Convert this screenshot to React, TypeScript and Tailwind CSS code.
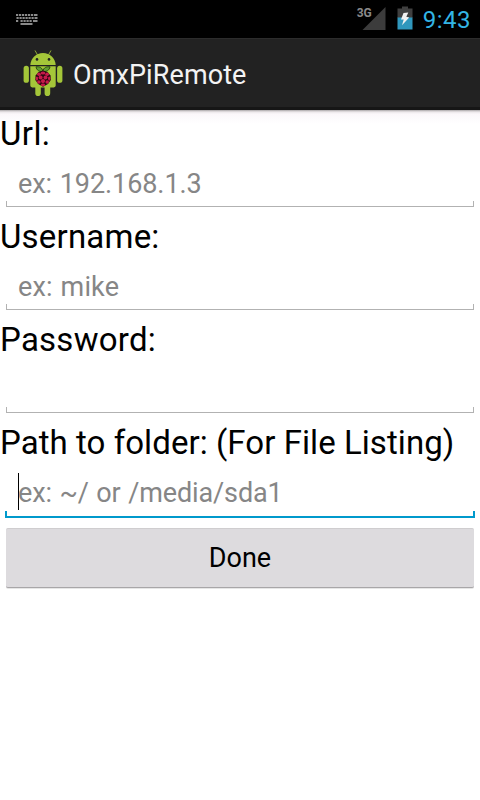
import React from 'react';

function KeyboardIcon() {
  const rows = [
    { y: 0, xs: [0, 3, 6, 9, 12, 15, 18] },
    { y: 3, xs: [0.5, 3.5, 6.5, 9.5, 12.5, 15.5, 18.5] },
    { y: 6, xs: [0, 4.5, 7.5, 10.5, 13.5, 17] },
  ];
  return (
    <svg width="22" height="12" viewBox="0 0 22 12" fill="#8a8a8a">
      {rows.map((r) =>
        r.xs.map((x, i) => (
          <rect key={`${r.y}-${i}`} x={x} y={r.y} width={i === r.xs.length - 1 ? 21.5 - x : 2.2} height="2" />
        )),
      )}
      <rect x="4.5" y="9" width="12" height="2" />
    </svg>
  );
}

function SignalIcon() {
  return (
    <svg width="24" height="24" viewBox="0 0 24 24">
      <path d="M0.5 24 L23.5 1 V24 Z" fill="#3c3c3c" />
    </svg>
  );
}

function BatteryIcon() {
  return (
    <svg width="16" height="24" viewBox="0 0 16 24">
      <path d="M5 0.5 H11 V2.5 H15.5 V12 H0.5 V2.5 H5 Z" fill="#404040" />
      <rect x="0.5" y="11.5" width="15" height="12" fill="#3097bd" />
      <path d="M6.5 7 L11.3 6.5 L9.3 10.8 L12.2 11.4 L5 19.2 L6.7 13.6 L4 13.4 Z" fill="#f2f2f2" />
    </svg>
  );
}

function AppLogo() {
  return (
    <svg width="48" height="48" viewBox="0 0 48 48">
      <g fill="#a4c639">
        <path d="M16.2 0.8 L18.8 5.4 M31.8 0.8 L29.2 5.4" stroke="#8eaa33" strokeWidth="1" strokeLinecap="round" />
        <path d="M11.3 15 C11.8 8.2 17 3 24 3 C31 3 36.2 8.2 36.7 15 Z" />
        <path d="M11.3 16.2 H36.7 V35.6 Q36.7 37.4 34.8 37.4 H31.2 V43.2 Q31.2 46 28.4 46 Q25.6 46 25.6 43.2 V37.4 H21.8 V43.2 Q21.8 46 19 46 Q16.3 46 16.3 43.2 V37.4 H13.2 Q11.3 37.4 11.3 35.6 Z" />
        <rect x="4.6" y="15.8" width="5.3" height="17" rx="2.6" />
        <rect x="38.1" y="15.8" width="5.3" height="17" rx="2.6" />
      </g>
      <circle cx="18" cy="9.4" r="1.3" fill="#222" />
      <circle cx="30" cy="9.4" r="1.3" fill="#222" />
      <path d="M23.8 21.4 C20.5 22 17.5 20.2 17 16.8 C20 16.4 23.2 17.2 23.8 21.4 C24.6 17.2 28 16.4 31 16.8 C30.5 20.2 27.5 22 23.8 21.4Z" fill="#62a030" stroke="#24430f" strokeWidth="0.9" />
      <path d="M24 20.5 L28.5 22 L31.5 25.5 L31.8 30 L29 34 L24 36.8 L19.2 34 L16.3 30 L16.6 25.5 L19.5 22 Z" fill="#2b0610" />
      <g fill="#c51a4a">
        <ellipse cx="24" cy="23" rx="2.4" ry="1.6" />
        <ellipse cx="20" cy="24.3" rx="1.9" ry="1.7" />
        <ellipse cx="28.1" cy="24.3" rx="1.9" ry="1.7" />
        <circle cx="21.6" cy="27.5" r="2" />
        <circle cx="26.5" cy="27.5" r="2" />
        <ellipse cx="17.9" cy="28.6" rx="1.2" ry="2.1" />
        <ellipse cx="30.2" cy="28.6" rx="1.2" ry="2.1" />
        <circle cx="24" cy="31.1" r="2.1" />
        <circle cx="19.9" cy="32" r="1.8" />
        <circle cx="28.2" cy="32" r="1.8" />
        <ellipse cx="24" cy="34.9" rx="2.2" ry="1.3" />
      </g>
    </svg>
  );
}

type FieldProps = {
  label: string;
  labelTracking: string;
  hint?: string;
  hintSpacing?: string;
  focused?: boolean;
};

function Field({ label, labelTracking, hint, hintSpacing = '', focused = false }: FieldProps) {
  return (
    <div className="flex h-[103px] flex-col">
      <div className={`h-[44px] text-[33px] leading-[45px] whitespace-nowrap text-black ${labelTracking}`}>{label}</div>
      <div className={focused ? 'flex h-[54px] flex-col px-[5px]' : 'flex h-[52px] flex-col px-[6px]'}>
        <div className={`flex flex-1 items-start pt-[9px] ${focused ? 'pl-[13px]' : 'pl-[12px]'}`}>
          {focused && <div className="h-[37px] w-px bg-black" />}
          <div
            className={`pt-[4px] text-[27px] leading-[32px] whitespace-nowrap text-[#868686] ${hintSpacing} ${focused ? '-ml-px' : ''}`}
          >
            {hint}
          </div>
        </div>
        <div
          className={
            focused
              ? '-mt-[7px] h-[7px] border-x-2 border-b-2 border-[#0099cc]'
              : '-mt-[6px] h-[6px] border-x border-b border-[#b2b2b2]'
          }
        />
      </div>
    </div>
  );
}

export default function App() {
  return (
    <div className="flex h-[800px] w-[480px] flex-col overflow-hidden bg-white font-['Roboto',sans-serif]">
      <div className="flex h-[38px] items-start bg-black">
        <div className="pt-[14px] pl-[16px]">
          <KeyboardIcon />
        </div>
        <div className="ml-auto flex items-start pr-[9px]">
          <span className="pt-[6px] text-[12px] leading-[15px] font-bold text-[#8a8a8a]">3G</span>
          <div className="-ml-[10px] pt-[6px]">
            <SignalIcon />
          </div>
          <div className="ml-[11px] pt-[6px]">
            <BatteryIcon />
          </div>
          <span className="ml-[10px] pt-[6px] text-[24px] leading-[28px] tracking-[0.5px] text-[#33b5e5]">9:43</span>
        </div>
      </div>
      <div className="flex h-[72px] items-start border-t border-b-[3px] border-t-[#2c2c2c] border-b-[#161616] bg-[#222222]">
        <div className="pt-[11px] pl-[19px]">
          <AppLogo />
        </div>
        <h1 className="pt-[20px] pl-[6px] text-[27px] leading-[32px] font-normal tracking-[0.1px] text-[#f3f3f3]">OmxPiRemote</h1>
      </div>
      <div className="flex h-[690px] flex-col bg-[linear-gradient(#aaa6a8_0px,#ece7ea_2px,#fbf7fa_4px,#ffffff_14px)] pt-px">
        <Field label="Url:" labelTracking="tracking-[0.4px]" hint="ex: 192.168.1.3" hintSpacing="[word-spacing:1px] tracking-[-0.07px]" />
        <Field label="Username:" labelTracking="tracking-[0.2px]" hint="ex: mike" hintSpacing="[word-spacing:1px] tracking-[0.15px]" />
        <Field label="Password:" labelTracking="tracking-[0.25px]" />
        <Field
          label="Path to folder: (For File Listing)"
          labelTracking="tracking-[0.06px]"
          hint="ex: ~/ or /media/sda1"
          hintSpacing="[word-spacing:1px] tracking-[-0.12px]"
          focused
        />
        <div className="px-[6px] pt-[5px]">
          <button className="block h-[60px] w-full rounded-[2px] border-t border-b border-t-[#cfcdcf] border-b-[#a8a6a8] bg-[#dddbde] pt-px text-[27px] leading-[57px] text-black shadow-[0_1px_0_#e6e6e6]">
            Done
          </button>
        </div>
      </div>
    </div>
  );
}
